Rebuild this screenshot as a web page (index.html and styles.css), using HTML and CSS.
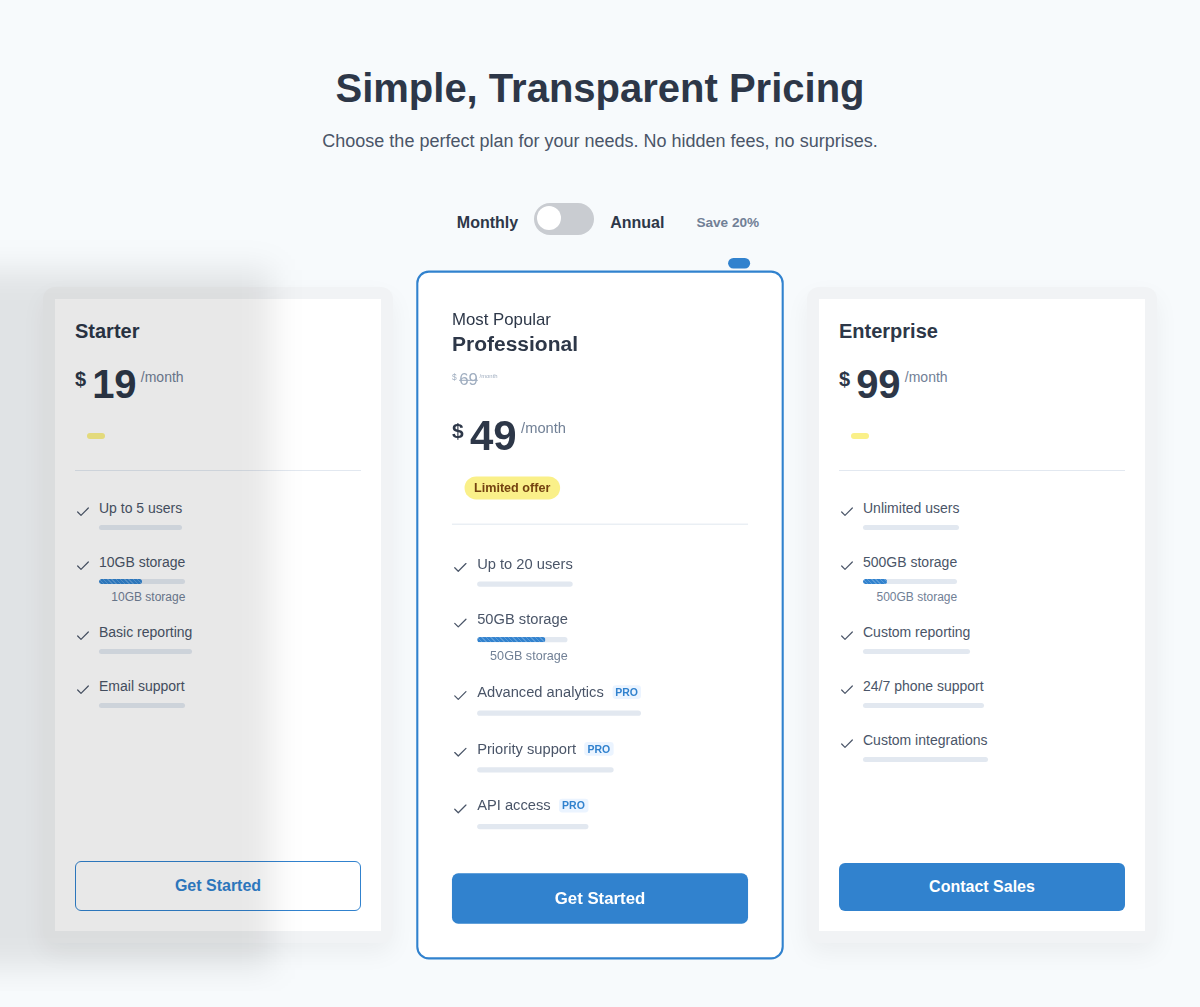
FILE: index.html
```html
<!DOCTYPE html>
<html lang="en">
<head>
  <meta charset="UTF-8">
  <meta name="viewport" content="width=device-width, initial-scale=1">
  <title>Pricing</title>
  <link rel="stylesheet" href="styles.css">
</head>
<body>
  <div class="page">
    <div class="shade"></div>

    <h1 class="title">Simple, Transparent Pricing</h1>
    <p class="subtitle">Choose the perfect plan for your needs. No hidden fees, no surprises.</p>

    <!-- Billing toggle -->
    <div class="billing">
      <span class="billing-label">Monthly</span>
      <span class="switch"><span class="switch-knob"></span></span>
      <span class="billing-label">Annual</span>
      <span class="save">Save 20%</span>
    </div>

    <div class="plans">
      <!-- Starter -->
      <div class="plan">
        <div class="plan-body">
          <h3 class="plan-name">Starter</h3>
          <div class="price">
            <span class="currency">$</span><span class="amount">19</span><span class="period">/month</span>
          </div>
          <div class="offer"><span class="badge"></span></div>
          <hr class="divider">
          <ul class="features">
            <li class="feature">
              <svg class="check" viewBox="0 0 24 24"><polyline points="20 6 9 17 4 12"/></svg>
              <div class="feature-body">
                <div class="feature-name">Up to 5 users</div>
                <div class="meter"></div>
              </div>
            </li>
            <li class="feature">
              <svg class="check" viewBox="0 0 24 24"><polyline points="20 6 9 17 4 12"/></svg>
              <div class="feature-body">
                <div class="feature-name">10GB storage</div>
                <div class="meter"><span class="meter-fill" style="width: 50%"></span></div>
                <div class="meter-label">10GB storage</div>
              </div>
            </li>
            <li class="feature">
              <svg class="check" viewBox="0 0 24 24"><polyline points="20 6 9 17 4 12"/></svg>
              <div class="feature-body">
                <div class="feature-name">Basic reporting</div>
                <div class="meter"></div>
              </div>
            </li>
            <li class="feature">
              <svg class="check" viewBox="0 0 24 24"><polyline points="20 6 9 17 4 12"/></svg>
              <div class="feature-body">
                <div class="feature-name">Email support</div>
                <div class="meter"></div>
              </div>
            </li>
          </ul>
          <button class="btn btn-outline">Get Started</button>
        </div>
      </div>

      <!-- Professional -->
      <div class="plan plan--featured">
        <span class="ribbon"></span>
        <div class="plan-body">
          <div class="plan-tag">Most Popular</div>
          <h3 class="plan-name">Professional</h3>
          <div class="price price-old">
            <span class="currency">$</span><span class="amount">69</span><span class="period">/month</span>
          </div>
          <div class="price">
            <span class="currency">$</span><span class="amount">49</span><span class="period">/month</span>
          </div>
          <div class="offer"><span class="badge">Limited offer</span></div>
          <hr class="divider">
          <ul class="features">
            <li class="feature">
              <svg class="check" viewBox="0 0 24 24"><polyline points="20 6 9 17 4 12"/></svg>
              <div class="feature-body">
                <div class="feature-name">Up to 20 users</div>
                <div class="meter"></div>
              </div>
            </li>
            <li class="feature">
              <svg class="check" viewBox="0 0 24 24"><polyline points="20 6 9 17 4 12"/></svg>
              <div class="feature-body">
                <div class="feature-name">50GB storage</div>
                <div class="meter"><span class="meter-fill" style="width: 75%"></span></div>
                <div class="meter-label">50GB storage</div>
              </div>
            </li>
            <li class="feature">
              <svg class="check" viewBox="0 0 24 24"><polyline points="20 6 9 17 4 12"/></svg>
              <div class="feature-body">
                <div class="feature-name">Advanced analytics <span class="tag">PRO</span></div>
                <div class="meter"></div>
              </div>
            </li>
            <li class="feature">
              <svg class="check" viewBox="0 0 24 24"><polyline points="20 6 9 17 4 12"/></svg>
              <div class="feature-body">
                <div class="feature-name">Priority support <span class="tag">PRO</span></div>
                <div class="meter"></div>
              </div>
            </li>
            <li class="feature">
              <svg class="check" viewBox="0 0 24 24"><polyline points="20 6 9 17 4 12"/></svg>
              <div class="feature-body">
                <div class="feature-name">API access <span class="tag">PRO</span></div>
                <div class="meter"></div>
              </div>
            </li>
          </ul>
          <button class="btn btn-primary">Get Started</button>
        </div>
      </div>

      <!-- Enterprise -->
      <div class="plan">
        <div class="plan-body">
          <h3 class="plan-name">Enterprise</h3>
          <div class="price">
            <span class="currency">$</span><span class="amount">99</span><span class="period">/month</span>
          </div>
          <div class="offer"><span class="badge"></span></div>
          <hr class="divider">
          <ul class="features">
            <li class="feature">
              <svg class="check" viewBox="0 0 24 24"><polyline points="20 6 9 17 4 12"/></svg>
              <div class="feature-body">
                <div class="feature-name">Unlimited users</div>
                <div class="meter"></div>
              </div>
            </li>
            <li class="feature">
              <svg class="check" viewBox="0 0 24 24"><polyline points="20 6 9 17 4 12"/></svg>
              <div class="feature-body">
                <div class="feature-name">500GB storage</div>
                <div class="meter"><span class="meter-fill" style="width: 25%"></span></div>
                <div class="meter-label">500GB storage</div>
              </div>
            </li>
            <li class="feature">
              <svg class="check" viewBox="0 0 24 24"><polyline points="20 6 9 17 4 12"/></svg>
              <div class="feature-body">
                <div class="feature-name">Custom reporting</div>
                <div class="meter"></div>
              </div>
            </li>
            <li class="feature">
              <svg class="check" viewBox="0 0 24 24"><polyline points="20 6 9 17 4 12"/></svg>
              <div class="feature-body">
                <div class="feature-name">24/7 phone support</div>
                <div class="meter"></div>
              </div>
            </li>
            <li class="feature">
              <svg class="check" viewBox="0 0 24 24"><polyline points="20 6 9 17 4 12"/></svg>
              <div class="feature-body">
                <div class="feature-name">Custom integrations</div>
                <div class="meter"></div>
              </div>
            </li>
          </ul>
          <button class="btn btn-primary">Contact Sales</button>
        </div>
      </div>
    </div>
  </div>
</body>
</html>
```

FILE: styles.css
```css
/* Base */
* {
  box-sizing: border-box;
}
body {
  margin: 0;
  background: #f7fafc;
  font-family: "Liberation Sans", Arial, sans-serif;
  color: #2d3748;
  overflow: hidden;
}
.page {
  position: relative;
  padding: 64px 0 48px;
}
/* Shade over the left side */
.shade {
  position: absolute;
  left: -100px;
  top: 270px;
  width: 372px;
  height: 698px;
  background: rgba(0, 0, 0, 0.09);
  filter: blur(16px);
  z-index: 5;
  pointer-events: none;
}
/* Header */
.title {
  margin: 0 0 16px;
  font-size: 40px;
  line-height: 48px;
  text-align: center;
  color: #2d3748;
}
.subtitle {
  margin: 0;
  font-size: 18px;
  line-height: 27px;
  text-align: center;
  color: #4a5568;
}
/* Billing toggle */
.billing {
  display: flex;
  justify-content: center;
  align-items: center;
  gap: 16px;
  height: 32px;
  margin-top: 48px;
  padding-left: 16px;
}
.billing-label {
  margin-top: 7px;
  font-size: 16px;
  font-weight: 700;
  color: #2d3748;
}
.switch {
  position: relative;
  width: 60px;
  height: 32px;
  border-radius: 16px;
  background: #c9ccd1;
}
.switch-knob {
  position: absolute;
  top: 3px;
  left: 3px;
  width: 24px;
  height: 24px;
  border-radius: 50%;
  background: #fff;
}
.save {
  margin: 7px 0 0 16px;
  font-size: 13.6px;
  font-weight: 700;
  color: #718096;
}
/* Plans */
.plans {
  display: grid;
  grid-template-columns: repeat(3, 350px);
  justify-content: center;
  gap: 32px;
  margin-top: 52px;
}
.plan {
  display: flex;
  flex-direction: column;
  min-height: 656px;
  padding: 12px;
  background: #f1f3f5;
  border-radius: 12px;
  box-shadow: 0 10px 25px rgba(0, 0, 0, 0.05);
}
.plan-body {
  flex: 1;
  display: flex;
  flex-direction: column;
  padding: 20px;
  background: #fff;
}
.plan--featured {
  position: relative;
  background: #fff;
  border: 2px solid #3182ce;
  box-shadow: none;
  transform: scale(1.05);
}
.plan--featured .features {
  gap: 21px;
}
.plan--featured .offer {
  margin-top: 10px;
}
.ribbon {
  position: absolute;
  top: -14px;
  right: 30px;
  width: 21px;
  height: 10px;
  border-radius: 5px;
  background: #3182ce;
}
.plan-tag {
  margin-top: 2px;
  font-size: 16px;
  line-height: 22px;
  color: #2d3748;
}
.plan-name {
  margin: 0;
  font-size: 20px;
  line-height: 24px;
  color: #2d3748;
}
/* Price */
.price {
  display: flex;
  align-items: flex-start;
  margin-top: 21px;
  font-size: 40px;
  line-height: 1;
  color: #2d3748;
}
.currency {
  margin: 0.23em 0.3em 0 0;
  font-size: 0.5em;
  font-weight: 700;
  line-height: 1;
}
.amount {
  font-weight: 700;
}
.period {
  margin: 0.43em 0 0 0.3em;
  font-size: 0.35em;
  line-height: 1;
  color: #718096;
}
.price-old {
  margin: 14px 0 4px;
  font-size: 16px;
  color: #a0aec0;
}
.price-old .currency,
.price-old .amount {
  font-weight: 400;
}
.price-old .amount {
  text-decoration: line-through;
}
.price-old .period {
  color: #a0aec0;
}
/* Offer badge */
.offer {
  display: flex;
  align-items: center;
  height: 40px;
  margin-top: 12px;
}
.badge {
  margin-left: 12px;
  padding: 3px 9px;
  border-radius: 999px;
  background: #faf089;
  color: #744210;
  font-size: 12px;
  font-weight: 700;
  line-height: 16px;
}
.badge:empty {
  display: block;
}
.divider {
  margin: 14px 0 0;
  border: 0;
  border-top: 1px solid #e2e8f0;
}
/* Features */
.features {
  display: flex;
  flex-direction: column;
  gap: 22px;
  margin: 27px 0 24px;
  padding: 0;
  list-style: none;
}
.feature {
  display: flex;
  align-items: flex-start;
  gap: 8px;
}
.check {
  flex: none;
  width: 16px;
  height: 16px;
  margin-top: 6px;
  fill: none;
  stroke: #4a5568;
  stroke-width: 1.8;
  stroke-linecap: round;
  stroke-linejoin: round;
}
.feature-name {
  font-size: 14px;
  line-height: 20px;
  color: #4a5568;
  white-space: nowrap;
}
.tag {
  margin-left: 4px;
  padding: 1px 3px;
  border-radius: 3px;
  background: #ebf4ff;
  color: #3182ce;
  font-size: 10px;
  font-weight: 700;
  vertical-align: 1px;
}
.meter {
  height: 5px;
  margin-top: 7px;
  border-radius: 3px;
  background: #e2e8f0;
  overflow: hidden;
}
.meter-fill {
  display: block;
  height: 100%;
  border-radius: 3px;
  background: repeating-linear-gradient(45deg, rgba(255, 255, 255, 0.2) 0 1px, transparent 1px 3px), #3182ce;
}
.meter-label {
  margin: 7px 0 -3px;
  font-size: 12px;
  line-height: 12px;
  text-align: right;
  color: #718096;
}
/* Buttons */
.btn {
  display: block;
  width: 100%;
  margin-top: auto;
  padding: 14px 0;
  border-radius: 6px;
  font-family: inherit;
  font-size: 16px;
  font-weight: 700;
  line-height: 20px;
  cursor: pointer;
}
.btn-outline {
  background: transparent;
  border: 1px solid #3182ce;
  color: #3182ce;
}
.btn-primary {
  background: #3182ce;
  border: 0;
  color: #fff;
}
```
